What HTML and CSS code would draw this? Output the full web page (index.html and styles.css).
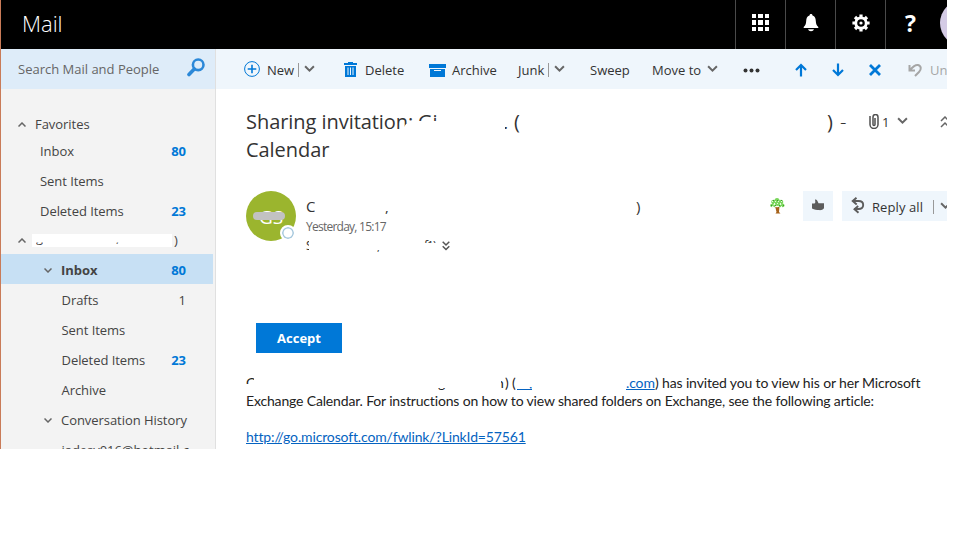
FILE: index.html
```html
<!DOCTYPE html>
<html lang="en">
<head>
<meta charset="utf-8">
<title>Mail</title>
<link rel="stylesheet" href="styles.css">
</head>
<body>
<div class="app">
  <header class="topbar">
    <h1 class="brand">Mail</h1>
    <div class="top-btn"><svg width="18" height="18" viewBox="0 0 18 18" fill="#fff"><path d="M0 0h4v4H0zM6 0h5v4H6zM13 0h4v4h-4zM0 6h4v5H0zM6 6h5v5H6zM13 6h4v5h-4zM0 13h4v4H0zM6 13h5v4H6zM13 13h4v4h-4z"/></svg></div>
    <div class="top-btn"><svg width="16" height="18" viewBox="0 0 16 18" fill="#fff"><path d="M8 0c1 0 1.500.7 1.500 1.500C12 2.300 12.600 4 12.800 7c.2 3 .7 4.500 2.500 6v1H.7v-1c1.800-1.500 2.300-3 2.500-6 .2-3 .8-4.700 3.300-5.500C6.500.7 7 0 8 0zM5 15.300h6c-.5 1.300-1.500 1.900-3 1.900s-2.500-.6-3-1.900z"/></svg></div>
    <div class="top-btn"><svg width="18" height="18" viewBox="-9 -9 18 18"><g stroke="#fff" fill="none"><circle r="5.200" stroke-width="2.800"/><path stroke-width="3.200" d="M0-8.600V-5M0 8.600V5M-8.600 0H-5M8.600 0H5M-6-6l2.400 2.400M6-6L3.600-3.600M-6 6l2.400-2.400M6 6L3.600 3.600"/></g><circle r="1.600" fill="#fff"/></svg></div>
    <div class="top-btn"><span class="help">?</span></div>
    <div class="me"></div>
  </header>

  <aside class="side">
    <div class="search"><span>Search Mail and People</span><svg width="18" height="19" viewBox="0 0 18 19" fill="none" stroke="#2b88d8"><circle cx="11.200" cy="6.800" r="5.300" stroke-width="2.600"/><path d="M7.300 11L2 16.500" stroke-width="3.600" stroke-linecap="round"/></svg></div>
    <nav class="tree">
      <div class="row group"><svg class="chev" viewBox="0 0 8 5"><path d="M.5 4.500L4 1l3.500 3.500"/></svg><span>Favorites</span></div>
      <div class="row fav first"><span>Inbox</span><b>80</b></div>
      <div class="row fav"><span>Sent Items</span></div>
      <div class="row fav"><span>Deleted Items</span><b>23</b></div>
      <div class="row group account"><svg class="chev" viewBox="0 0 8 5"><path d="M.5 4.500L4 1l3.500 3.500"/></svg><span class="redacted"><i class="tail-g">g</i><i class="tail-comma">,</i></span><span class="paren">)</span></div>
      <div class="row sub selected"><svg class="chev" viewBox="0 0 8 5"><path d="M.5.5L4 4 7.500.5"/></svg><span>Inbox</span><b>80</b></div>
      <div class="row sub"><span>Drafts</span><em>1</em></div>
      <div class="row sub"><span>Sent Items</span></div>
      <div class="row sub"><span>Deleted Items</span><b>23</b></div>
      <div class="row sub"><span>Archive</span></div>
      <div class="row sub"><svg class="chev" viewBox="0 0 8 5"><path d="M.5.5L4 4 7.500.5"/></svg><span>Conversation History</span></div>
      <div class="row sub cut"><span>jadesy016@hotmail.c</span></div>
    </nav>
  </aside>

  <main class="main">
    <div class="toolbar">
      <div class="tool"><svg class="i-new" width="16" height="16" viewBox="0 0 16 16" fill="none" stroke="#0078d7"><circle cx="8" cy="8" r="7.400"/><path stroke-width="1.600" d="M8 3.700v8.600M3.700 8h8.600"/></svg><span>New</span><i class="bar"></i><svg class="down" viewBox="0 0 10 7"><path d="M1 1l4 4 4-4"/></svg></div>
      <div class="tool"><svg class="i-trash" width="13" height="16" viewBox="0 0 13 16"><path fill="#0078d7" d="M4 0h5v1h4v2H0V1h4zM1 4h11v11H1z"/><path stroke="#eff6fc" d="M4 5.500v7.500M6.500 5.500v7.500M9 5.500v7.500"/></svg><span>Delete</span></div>
      <div class="tool"><svg class="i-arch" width="17" height="13" viewBox="0 0 17 13"><path fill="#0078d7" d="M0 0h17v4H0zM1 5h15v8H1z"/><path stroke="#eff6fc" d="M5 6.500h7"/></svg><span>Archive</span></div>
      <div class="tool"><span>Junk</span><i class="bar"></i><svg class="down" viewBox="0 0 10 7"><path d="M1 1l4 4 4-4"/></svg></div>
      <div class="tool"><span>Sweep</span></div>
      <div class="tool"><span>Move to</span><svg class="down move" viewBox="0 0 10 7"><path d="M1 1l4 4 4-4"/></svg></div>
      <div class="tool"><svg width="17" height="5" viewBox="0 0 17 5" fill="#333"><circle cx="2.500" cy="2.500" r="2"/><circle cx="8.500" cy="2.500" r="2"/><circle cx="14.500" cy="2.500" r="2"/></svg></div>
      <div class="tool lift"><svg width="12" height="14" viewBox="0 0 12 14" fill="none" stroke="#0078d7" stroke-width="2.200"><path d="M6 13.500V2M1 7l5-5 5 5"/></svg></div>
      <div class="tool lift"><svg width="12" height="14" viewBox="0 0 12 14" fill="none" stroke="#0078d7" stroke-width="2.200"><path d="M6 .5V12M1 7l5 5 5-5"/></svg></div>
      <div class="tool lift"><svg width="12" height="12" viewBox="0 0 12 12" fill="none" stroke="#0078d7" stroke-width="2.800"><path d="M1 1l10 10M11 1L1 11"/></svg></div>
      <div class="tool undo"><svg width="14" height="14" viewBox="0 0 14 14" fill="none" stroke="#a6a6a6" stroke-width="2"><path d="M1.500 2v5.500h5.500M2 7C5 3.500 7.500 1.500 10 2c3.500 1 3.500 4.500 1 7L7 13"/></svg><span>Un</span></div>
    </div>

    <section class="head">
      <h2 class="subject"><span class="s1">Sharing invitation:</span><span class="s2">Gi</span><span class="s3">.</span><span class="s4">(</span><span class="s5">)</span><span class="s6">-</span></h2>
      <div class="attach"><svg class="i-clip" width="10" height="15" viewBox="0 0 10 15" fill="none" stroke="#505050" stroke-width="1.500"><path d="M1 2v8.500a4 4 0 0 0 8 0V3a2.500 2.500 0 0 0-5 0v7.500a1 1 0 0 0 2 0V4"/></svg><span>1</span><svg class="down" viewBox="0 0 10 7"><path d="M1 1l4 4 4-4"/></svg><svg class="i-dbl" width="10" height="12" viewBox="0 0 10 12"><path d="M1 5l4-4 4 4M1 11l4-4 4 4"/></svg></div>
      <div class="subject2">Calendar</div>
    </section>

    <section class="sender">
      <div class="avatar"><span>GS</span><i class="scribble"></i><i class="presence"></i></div>
      <div class="who">
        <div class="name"><span class="n1">C</span><span class="n2">,</span><span class="n3">)</span></div>
        <div class="date">Yesterday, 15:17</div>
        <div class="to"><span class="t1">S</span><span class="t2">,</span><span class="t3">f1)</span><svg width="8" height="10" viewBox="0 0 8 10"><path d="M.7.7L4 4 7.300.7M.7 5.200L4 8.500l3.300-3.300"/></svg></div>
      </div>
      <svg class="tree-icon" width="15" height="16" viewBox="0 0 15 16"><path fill="#a6621b" d="M5 8l2 1.500L9.500 8 9 14l1.500 1.500h-5L6.500 14z"/><g fill="#7ad65c"><circle cx="7" cy="2.500" r="2.500"/><circle cx="3.500" cy="4" r="2.300"/><circle cx="11" cy="4" r="2.300"/><circle cx="2" cy="7.400" r="1.800"/><circle cx="12.700" cy="7.400" r="1.800"/><circle cx="7.500" cy="5.500" r="2.500"/><circle cx="4.700" cy="8" r="1.200"/><circle cx="10" cy="8" r="1.200"/></g><path stroke="#e8f8e0" stroke-dasharray="1 2" d="M2 3.500h11M1 5.500h13M2 8.500h11"/><path stroke="#3d9a30" stroke-dasharray="1 3" d="M3 2.500h9M1 7.500h13"/></svg>
      <div class="chip like"><svg width="12" height="12" viewBox="0 0 12 12" fill="#5c5c5c"><path d="M0 4.500h2.500C4 3.500 3 2 3 .5 4.500 0 5.500 1.500 6.500 4.300h5.500v5c-1 1.500-3 2-5 1.800C4.500 11 2.500 10.500 0 9.500z"/></svg></div>
      <div class="chip reply"><svg width="14" height="17" viewBox="0 0 14 17" fill="none" stroke="#5c5c5c" stroke-width="1.900"><path d="M5.500.7L1.700 4l4 3.500M2 4h5.500c3 0 4.700 1.500 4.700 4s-1.700 4-4.700 4H3M7.200 9L3.500 12.200l4 3.500"/></svg><span>Reply all</span><i class="bar"></i><svg class="down" viewBox="0 0 10 7"><path d="M1 1l4 4 4-4"/></svg></div>
    </section>

    <button class="accept">Accept</button>

    <article class="body">
      <p class="l1"><span class="b1">C</span><span class="b2">g</span><span class="b3">n</span><span class="b4">) (</span><a class="b5"><i>,</i></a><a class="b6">.com</a><span class="b7">) has invited you to view his or her Microsoft</span></p>
      <p class="l2">Exchange Calendar. For instructions on how to view shared folders on Exchange, see the following article:</p>
      <p class="l3"><a>http://go.microsoft.com/fwlink/?LinkId=57561</a></p>
    </article>
  </main>
</div>
</body>
</html>
```
FILE: styles.css
```css
* { box-sizing: border-box; }
body { margin: 0; background: #fff; color: #333; font: 13px/18px "Open Sans", "Noto Sans", sans-serif; }
i, em { font-style: normal; }
h1, h2, p { margin: 0; font-weight: 400; }
svg { flex: none; display: block; }
.app { width: 947px; height: 449px; overflow: hidden; border-left: 1px solid #c97b58; display: grid; grid-template: 49px 400px / 215px 731px; }

.topbar { grid-column: 1 / 3; background: #000; display: flex; overflow: hidden; }
.brand { flex: none; width: 734px; padding-left: 21px; color: #fff; font-size: 22px; line-height: 47px; font-weight: 300; }
.top-btn { flex: none; width: 50px; border-left: 1px solid #4a4a4a; display: flex; align-items: center; justify-content: center; padding-bottom: 4px; }
.help { color: #fff; font-weight: 700; font-size: 23px; line-height: 30px; }
.me { flex: none; width: 46px; height: 46px; border-radius: 50%; background: #d4cbe5; margin-left: 5px; }

.side { background: #f3f3f3; border-right: 1px solid #e0e0e0; }
.search { height: 40px; background: #deecf9; padding: 0 10px 0 17px; display: flex; align-items: center; justify-content: space-between; color: #666; }
.search svg { margin-bottom: 3px; }
.tree { padding-top: 20px; }
.row { height: 30px; width: 212px; padding-right: 27px; display: flex; align-items: center; color: #444; white-space: nowrap; letter-spacing: -0.05px; }
.row b, .row em { margin-left: auto; }
.row b { color: #0078d7; font-weight: 700; }
.chev { width: 8px; height: 5px; fill: none; stroke: #666; stroke-width: 1.5; }
.group { padding-left: 17px; }
.group .chev { margin-right: 9px; }
.fav { padding-left: 39px; }
.first { margin-top: -3px; }
.account { height: 28px; padding-right: 0; }
.account .chev { margin-right: 6px; }
.redacted { width: 140px; height: 13px; background: #fff; position: relative; }
.tail-g, .tail-comma { position: absolute; top: -6px; left: 4px; clip-path: inset(15px 0 0 0); }
.tail-comma { left: 84px; }
.paren { margin-left: 2px; }
.sub { padding: 2px 27px 0 60.5px; }
.sub .chev { margin: 0 9px 0 -17.5px; }
.selected { background: #c7e0f4; }
.selected span { font-weight: 700; }
.cut { height: 20px; padding-top: 11px; }

.main { overflow: hidden; }
.toolbar { width: 731px; overflow: hidden; height: 40px; background: #eff6fc; padding-left: 28px; display: grid; grid-template-columns: 100px 85px 89px 72px 62px 91px 52px 37px 37px 39px 39px; }
.tool { display: flex; align-items: center; white-space: nowrap; padding-top: 2px; }
.lift { padding-top: 1px; }
.i-new { margin: 0 7px 2px 0; }
.i-trash { margin-right: 8px; }
.i-arch { margin-right: 6px; }
.bar { flex: none; width: 1px; height: 14px; background: #999; margin: 0 5px 0 4px; }
.down { width: 11px; height: 8px; fill: none; stroke: #666; stroke-width: 1.8; margin-bottom: 3px; }
.move { margin-left: 6px; }
.undo { color: #a6a6a6; }
.undo svg { margin-right: 8px; }

.head { height: 102px; padding: 19px 0 0 30px; display: grid; grid-template: 28px 28px / 622px 100px; }
.subject, .subject2 { font-size: 20px; line-height: 28px; color: #333; font-weight: 400; letter-spacing: -0.05px; }
.subject { display: grid; grid-template-columns: 172px 85px 11px 313px 13px 20px; white-space: nowrap; }
.s1 { clip-path: polygon(0 0, 100% 0, 100% 15px, 160px 16px, 156px 22px, 152px 28px, 0 28px); }
.s2 { clip-path: inset(0 0 15px 0); }
.s3 { clip-path: inset(19px 0 0 2px); }
.s6 { font-weight: 300; }
.attach { display: flex; align-items: center; white-space: nowrap; }
.i-clip { margin: 0 3px 2px 1px; }
.attach .down { margin-left: 8px; }
.i-dbl { margin-left: 32px; fill: none; stroke: #666; stroke-width: 1.5; }

.sender { height: 132px; padding-left: 30px; display: flex; }
.avatar { flex: none; width: 50px; height: 50px; border-radius: 50%; background: #9bb52e; color: #fff; font-size: 19px; line-height: 52px; text-align: center; position: relative; }
.scribble { position: absolute; left: 7px; top: 21px; width: 32px; height: 8px; border-radius: 5px; background: #c2c2c2; }
.presence { position: absolute; left: 34px; top: 34px; width: 16px; height: 16px; border-radius: 50%; border: 2px solid #fff; background: #fff; box-shadow: inset 0 0 0 1.5px #a3c6dc; }
.who { flex: none; width: 463px; margin-left: 10px; }
.name { display: grid; grid-template-columns: 79px 251px 20px; font-size: 15px; line-height: 20px; height: 28px; padding-top: 5px; }
.n1 { width: 9px; overflow: hidden; }
.n2 { clip-path: inset(15px 0 2px 0); }
.date { color: #666; font-size: 12px; line-height: 16px; letter-spacing: -0.4px; font-stretch: 90%; }
.date { letter-spacing: -0.75px; }
.to { display: grid; grid-template-columns: 71px 47px 18px 10px; font-size: 12px; line-height: 18px; height: 18px; margin-top: 2px; align-items: center; }
.to span { height: 18px; letter-spacing: -1px; }
.t1 { width: 4px; clip-path: inset(0 1px 0 0); }
.t2 { clip-path: inset(13px 0 2px 0); }
.t3 { clip-path: inset(0 0 12px 0); }
.to svg { fill: none; stroke: #555; stroke-width: 1.5; }
.tree-icon { margin: 7px 18px 0 1px; }
.chip { height: 30px; background: #eff6fc; display: flex; align-items: center; flex: none; }
.like { width: 30px; justify-content: center; padding-bottom: 3px; margin-right: 9px; }
.reply { width: 105px; padding: 2px 0 0 9px; white-space: nowrap; overflow: hidden; }
.reply span { letter-spacing: 0.1px; }
.reply svg:first-child { margin: 0 7px 3px 0; }
.reply .bar { margin: 0 6px 0 10px; }

.accept { display: block; width: 86px; height: 30px; margin-left: 40px; padding: 0; border: 0; background: #0078d7; color: #fff; font: 700 13px/30px "Open Sans", sans-serif; }
.body { margin: 21px 0 0 30px; font: 14px/18px Lato, "Open Sans", sans-serif; color: #222; white-space: nowrap; letter-spacing: -0.14px; font-variant-ligatures: none; }
.body a { color: #0563c1; text-decoration: underline; }
.l1 { display: grid; grid-template-columns: 192px 62px 5px 12px 109px 29px 300px; }
.b1 { width: 8px; clip-path: inset(0 0 8px 0); }
.b2 { clip-path: inset(14px 0 0 0); }
.b3 { width: 8px; margin-left: -4px; clip-path: inset(0 0 0 5px); }
.body .b5 { width: 15px; height: 16px; border-bottom: 1px solid #0563c1; text-decoration: none; }
.b5 i { display: block; clip-path: inset(13px 0 0 0); margin-left: 12px; }
.l2 { letter-spacing: -0.16px; }
.l3 { margin-top: 18px; }
```
